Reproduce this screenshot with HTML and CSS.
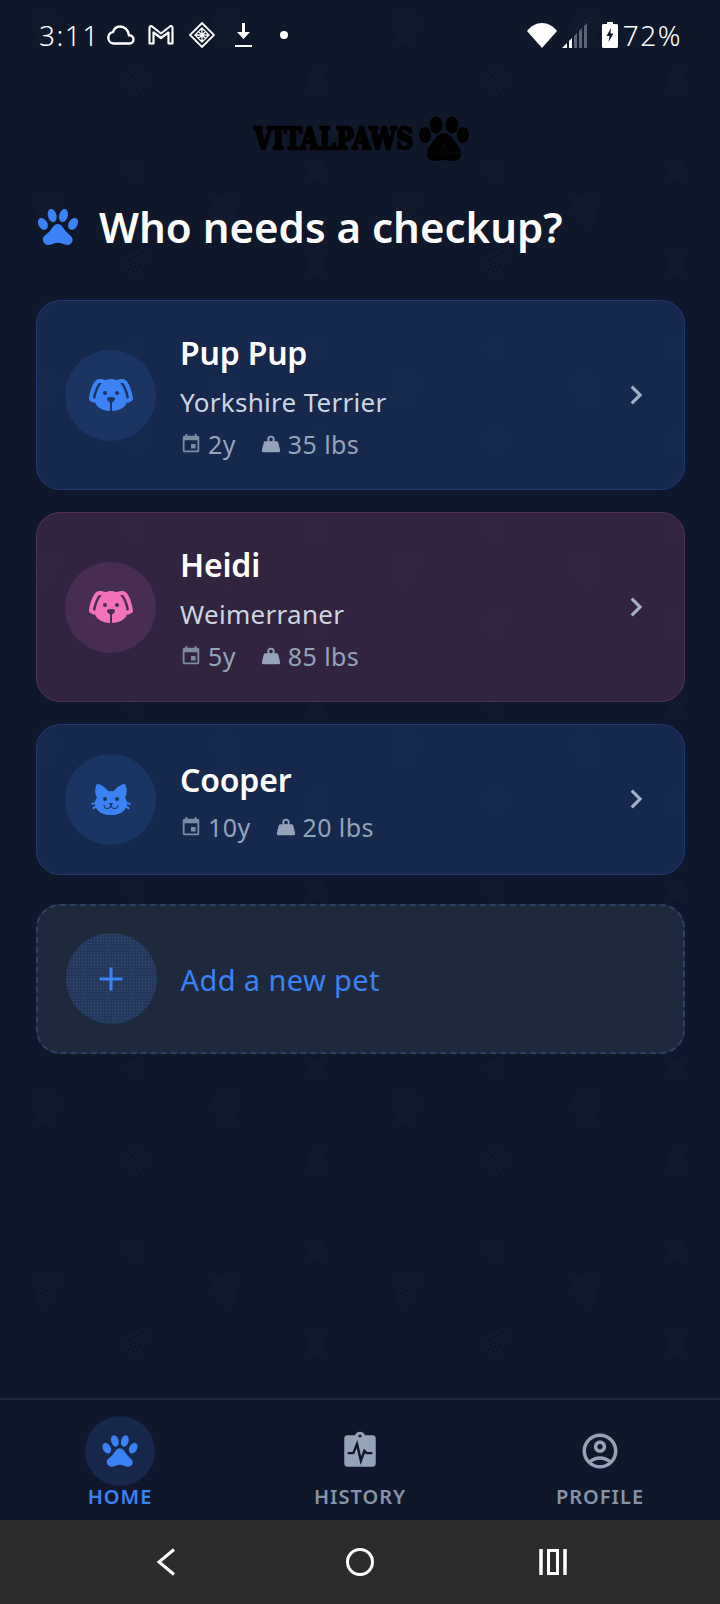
FILE: index.html
```html
<!DOCTYPE html>
<html lang="en">
<head>
  <meta charset="UTF-8" />
  <meta name="viewport" content="width=device-width, initial-scale=1.0" />
  <title>VitalPaws</title>
  <link rel="stylesheet" href="styles.css">
</head>
<body>

  <!-- faint paw wallpaper -->
  <svg class="wallpaper" width="720" height="1604" aria-hidden="true">
    <defs>
      <pattern id="dots" width="4" height="4" patternUnits="userSpaceOnUse" patternTransform="rotate(30)">
        <circle cx="2" cy="2" r="0.6" fill="#2e3848" />
      </pattern>
      <pattern id="tile" width="180" height="180" patternUnits="userSpaceOnUse">
        <path fill="url(#dots)" d="M32 20 C36 12 54 12 58 20 L59 28 L56 29 L56 39 C54 46 36 46 36 39 L36 29 L32 28 Z" />
        <path fill="url(#dots)" d="M127 74 C130 69 142 69 145 74 L145 84 C144 92 139 96 135 97 C131 96 128 92 127 84 Z" />
        <path fill="url(#dots)" d="M127 163 C130 160 141 160 144 163 L142 176 C140 182 137 184 136 184 C134 184 131 182 129 176 Z" />
      </pattern>
    </defs>
    <rect width="720" height="1604" fill="url(#tile)" />
  </svg>

  <div class="status-bar">
    <div class="status-left">
      <span class="status-time">3:11</span>
      <svg class="ic-cloud" width="28" height="20" viewBox="0 0 28 20"><path fill="none" stroke="#fff" stroke-width="2.400" d="M7 18.500H22.500C25 18.500 26.500 16.500 26.500 14.500 26.500 12 24.500 10.300 22 10.300 21.500 5 17.500 1.500 13 1.500 9.500 1.500 7 4 6 7 3.500 7.300 1.300 9.800 1.300 12.800 1.300 16 3.800 18.500 7 18.500Z" /></svg>
      <svg class="ic-mail" width="26" height="20" viewBox="0 0 26 20"><path fill="none" stroke="#fff" stroke-width="2.200" stroke-linejoin="round" d="M1.500 3 Q1.500 1 3.500 1 L13 8.500 22.500 1 Q24.500 1 24.500 3 V18.500 H20.500 V7.500 L13 13 5.500 7.500 V18.500 H1.500 Z" /></svg>
      <svg class="ic-diamond" width="26" height="26" viewBox="0 0 26 26"><g fill="none" stroke="#fff"><path stroke-width="1.800" d="M13 1 L25 13 13 25 1 13Z" /><path stroke-width="1.300" d="M13 6 L20 13 13 20 6 13Z M9.500 9.500 L16.500 16.500 M16.500 9.500 L9.500 16.500 M13 6 V20 M6 13 H20" /></g></svg>
      <svg class="ic-download" width="19" height="25" viewBox="0 0 19 25"><path fill="#fff" d="M8 0H11V9H16L9.500 16 3 9H8ZM1 22H18V24H1Z" /></svg>
      <span class="status-dot"></span>
    </div>
    <div class="status-right">
      <svg width="30" height="25" viewBox="0 0 30 25"><path fill="#fff" d="M15 25 L0 8 C4 3 9 0 15 0 C21 0 26 3 30 8 Z" /></svg>
      <svg class="ic-signal" width="26" height="26" viewBox="0 0 26 26">
        <path fill="#fff" d="M0 26L5 21V26Z M7 19L10 16V26H7Z" />
        <path fill="#5b6473" d="M12 14L15 11V26H12Z M17 9L20 6V26H17Z M22 4L25 1V26H22Z" />
      </svg>
      <svg class="ic-battery" width="16" height="26" viewBox="0 0 16 26"><path fill="#fff" fill-rule="evenodd" d="M5 0H11V2H14.500C15.300 2 16 2.700 16 3.500V24.500C16 25.300 15.300 26 14.500 26H1.500C0.700 26 0 25.300 0 24.500V3.500C0 2.700 0.700 2 1.500 2H5ZM9 6L4.500 14H7.500L6.500 20 11.500 11.500H8.500Z" /></svg>
      <span class="status-pct">72%</span>
    </div>
  </div>

  <div class="logo">
    <span class="logo-text">VITALPAWS</span>
    <svg width="50" height="46" viewBox="0 0 50 46">
      <g fill="#000">
        <ellipse cx="17" cy="9" rx="6.500" ry="8.500" />
        <ellipse cx="33" cy="9" rx="6.500" ry="8.500" />
        <ellipse cx="6" cy="19" rx="6" ry="8" />
        <ellipse cx="44" cy="19" rx="6" ry="8" />
        <path d="M25 17 C32 17 37 27 41 33 C44 39 41 45 35 45 C31 45 29 44 25 44 C21 44 19 45 15 45 C9 45 6 39 9 33 C13 27 18 17 25 17Z" />
      </g>
      <path fill="none" stroke="#101827" stroke-width="0.500" d="M8 36H19L21 38 23 33 25 27 27 39 29 34 31 37H42" />
    </svg>
  </div>

  <h1 class="page-title">
    <svg class="ic-title" width="48" height="48" viewBox="0 0 24 24"><path d="M8.350,3C9.530,2.830 10.800,4.120 11.210,5.920C11.600,7.710 11.030,9.320 9.850,9.500C8.680,9.680 7.400,8.390 7,6.600C6.590,4.810 7.170,3.200 8.350,3M15.500,3C16.690,3.200 17.270,4.810 16.880,6.600C16.470,8.390 15.190,9.680 14,9.500C12.830,9.320 12.260,7.710 12.660,5.920C13.070,4.120 14.340,2.830 15.500,3M3,7.600C4.140,7.110 5.690,8 6.500,9.550C7.260,11.130 7,12.790 5.870,13.280C4.740,13.770 3.200,12.890 2.410,11.320C1.620,9.750 1.900,8.080 3,7.600M21,7.600C22.100,8.080 22.380,9.750 21.590,11.320C20.800,12.890 19.260,13.770 18.130,13.280C17,12.790 16.740,11.130 17.500,9.550C18.310,8 19.860,7.110 21,7.600M19.330,18.380C19.370,19.320 18.650,20.360 17.790,20.750C16,21.570 13.880,19.870 11.890,19.870C9.900,19.870 7.760,21.640 6,20.750C5,20.260 4.310,18.960 4.440,17.880C4.620,16.390 6.410,15.590 7.470,14.500C8.880,13.090 9.880,10.440 11.890,10.440C13.890,10.440 14.950,13.050 16.300,14.500C17.410,15.720 19.260,16.750 19.330,18.380Z" /></svg>
    Who needs a checkup?
  </h1>

  <main class="pets">

    <a class="pet-card blue">
      <div class="avatar">
        <svg width="48" height="48" viewBox="0 0 24 24"><path d="M18,4C16.290,4 15.250,4.330 14.650,4.610C13.880,4.230 13,4 12,4C11,4 10.120,4.230 9.350,4.610C8.750,4.330 7.710,4 6,4C3,4 1,12 1,14C1,14.830 2.320,15.590 4.140,15.900C4.780,18.140 7.800,19.850 11.500,20V15.720C10.910,15.350 10,14.680 10,14C10,13 12,13 12,13C12,13 14,13 14,14C14,14.680 13.090,15.350 12.500,15.720V20C16.200,19.850 19.220,18.140 19.860,15.900C21.680,15.590 23,14.830 23,14C23,12 21,4 18,4M4.150,13.870C3.650,13.750 3.260,13.610 3,13.500C3.250,10.730 5.200,6.400 6.050,6C6.590,6 7,6.060 7.370,6.110C5.270,8.420 4.440,12.040 4.150,13.870M9,12A1,1 0 0,1 8,11C8,10.460 8.450,10 9,10A1,1 0 0,1 10,11C10,11.560 9.550,12 9,12M15,12A1,1 0 0,1 14,11C14,10.460 14.450,10 15,10A1,1 0 0,1 16,11C16,11.560 15.550,12 15,12M19.850,13.870C19.560,12.040 18.730,8.420 16.630,6.110C17,6.060 17.410,6 17.950,6C18.800,6.400 20.750,10.730 21,13.500C20.750,13.610 20.360,13.750 19.850,13.870Z" /></svg>
      </div>
      <div class="pet-info">
        <div class="pet-name">Pup Pup</div>
        <div class="pet-breed">Yorkshire Terrier</div>
        <div class="pet-meta">
          <span class="meta-item"><svg class="ic-meta dim" viewBox="0 0 24 24"><path d="M17 12h-5v5h5v-5zM16 1v2H8V1H6v2H5c-1.110 0-1.990.9-1.990 2L3 19c0 1.100.89 2 2 2h14c1.100 0 2-.9 2-2V5c0-1.100-.9-2-2-2h-1V1h-2zm3 18H5V8h14v11z" /></svg>2y</span>
          <span class="meta-item"><svg class="ic-meta" viewBox="0 0 24 24"><path d="M12,3A4,4 0 0,1 16,7C16,7.730 15.810,8.410 15.460,9H18C18.950,9 19.750,9.670 19.950,10.560C21.960,18.570 22,18.780 22,19A2,2 0 0,1 20,21H4A2,2 0 0,1 2,19C2,18.780 2.040,18.570 4.050,10.560C4.250,9.670 5.050,9 6,9H8.540C8.190,8.410 8,7.730 8,7A4,4 0 0,1 12,3M12,5A2,2 0 0,0 10,7A2,2 0 0,0 12,9A2,2 0 0,0 14,7A2,2 0 0,0 12,5Z" /></svg>35 lbs</span>
        </div>
      </div>
      <svg class="chevron" viewBox="0 0 24 24"><path d="M10 6L8.590 7.410 13.170 12l-4.580 4.590L10 18l6-6z" /></svg>
    </a>

    <a class="pet-card pink">
      <div class="avatar">
        <svg width="48" height="48" viewBox="0 0 24 24"><path d="M18,4C16.290,4 15.250,4.330 14.650,4.610C13.880,4.230 13,4 12,4C11,4 10.120,4.230 9.350,4.610C8.750,4.330 7.710,4 6,4C3,4 1,12 1,14C1,14.830 2.320,15.590 4.140,15.900C4.780,18.140 7.800,19.850 11.500,20V15.720C10.910,15.350 10,14.680 10,14C10,13 12,13 12,13C12,13 14,13 14,14C14,14.680 13.090,15.350 12.500,15.720V20C16.200,19.850 19.220,18.140 19.860,15.900C21.680,15.590 23,14.830 23,14C23,12 21,4 18,4M4.150,13.870C3.650,13.750 3.260,13.610 3,13.500C3.250,10.730 5.200,6.400 6.050,6C6.590,6 7,6.060 7.370,6.110C5.270,8.420 4.440,12.040 4.150,13.870M9,12A1,1 0 0,1 8,11C8,10.460 8.450,10 9,10A1,1 0 0,1 10,11C10,11.560 9.550,12 9,12M15,12A1,1 0 0,1 14,11C14,10.460 14.450,10 15,10A1,1 0 0,1 16,11C16,11.560 15.550,12 15,12M19.850,13.870C19.560,12.040 18.730,8.420 16.630,6.110C17,6.060 17.410,6 17.950,6C18.800,6.400 20.750,10.730 21,13.500C20.750,13.610 20.360,13.750 19.850,13.870Z" /></svg>
      </div>
      <div class="pet-info">
        <div class="pet-name">Heidi</div>
        <div class="pet-breed">Weimerraner</div>
        <div class="pet-meta">
          <span class="meta-item"><svg class="ic-meta dim" viewBox="0 0 24 24"><path d="M17 12h-5v5h5v-5zM16 1v2H8V1H6v2H5c-1.110 0-1.990.9-1.990 2L3 19c0 1.100.89 2 2 2h14c1.100 0 2-.9 2-2V5c0-1.100-.9-2-2-2h-1V1h-2zm3 18H5V8h14v11z" /></svg>5y</span>
          <span class="meta-item"><svg class="ic-meta" viewBox="0 0 24 24"><path d="M12,3A4,4 0 0,1 16,7C16,7.730 15.810,8.410 15.460,9H18C18.950,9 19.750,9.670 19.950,10.560C21.960,18.570 22,18.780 22,19A2,2 0 0,1 20,21H4A2,2 0 0,1 2,19C2,18.780 2.040,18.570 4.050,10.560C4.250,9.670 5.050,9 6,9H8.540C8.190,8.410 8,7.730 8,7A4,4 0 0,1 12,3M12,5A2,2 0 0,0 10,7A2,2 0 0,0 12,9A2,2 0 0,0 14,7A2,2 0 0,0 12,5Z" /></svg>85 lbs</span>
        </div>
      </div>
      <svg class="chevron" viewBox="0 0 24 24"><path d="M10 6L8.590 7.410 13.170 12l-4.580 4.590L10 18l6-6z" /></svg>
    </a>

    <a class="pet-card blue">
      <div class="avatar">
        <svg width="48" height="48" viewBox="0 0 24 24"><path d="M12,8L10.670,8.090C9.810,7.070 7.400,4.500 5,4.500C5,4.500 3.030,7.460 4.960,11.410C4.410,12.240 4.070,12.670 4,13.660L2.070,13.950L2.280,14.930L4.040,14.670L4.180,15.380L2.610,16.320L3.080,17.210L4.530,16.320C5.680,18.760 8.590,20 12,20C15.410,20 18.320,18.760 19.470,16.320L20.920,17.210L21.390,16.320L19.820,15.380L19.960,14.670L21.720,14.930L21.930,13.950L20,13.660C19.930,12.670 19.590,12.240 19.040,11.410C20.970,7.460 19,4.500 19,4.500C16.600,4.500 14.190,7.070 13.330,8.090L12,8M9,11A1,1 0 0,1 10,12A1,1 0 0,1 9,13A1,1 0 0,1 8,12A1,1 0 0,1 9,11M15,11A1,1 0 0,1 16,12A1,1 0 0,1 15,13A1,1 0 0,1 14,12A1,1 0 0,1 15,11M11,14H13L12.300,15.390C12.500,16.030 13.060,16.500 13.750,16.500A1.500,1.500 0 0,0 15.250,15H15.750A2,2 0 0,1 13.750,17C13,17 12.350,16.590 12,16V16H12C11.650,16.590 11,17 10.250,17A2,2 0 0,1 8.250,15H8.750A1.500,1.500 0 0,0 10.250,16.500C10.940,16.500 11.500,16.030 11.700,15.390L11,14Z" /></svg>
      </div>
      <div class="pet-info short">
        <div class="pet-name">Cooper</div>
        <div class="pet-meta">
          <span class="meta-item"><svg class="ic-meta dim" viewBox="0 0 24 24"><path d="M17 12h-5v5h5v-5zM16 1v2H8V1H6v2H5c-1.110 0-1.990.9-1.990 2L3 19c0 1.100.89 2 2 2h14c1.100 0 2-.9 2-2V5c0-1.100-.9-2-2-2h-1V1h-2zm3 18H5V8h14v11z" /></svg>10y</span>
          <span class="meta-item"><svg class="ic-meta" viewBox="0 0 24 24"><path d="M12,3A4,4 0 0,1 16,7C16,7.730 15.810,8.410 15.460,9H18C18.950,9 19.750,9.670 19.950,10.560C21.960,18.570 22,18.780 22,19A2,2 0 0,1 20,21H4A2,2 0 0,1 2,19C2,18.780 2.040,18.570 4.050,10.560C4.250,9.670 5.050,9 6,9H8.540C8.190,8.410 8,7.730 8,7A4,4 0 0,1 12,3M12,5A2,2 0 0,0 10,7A2,2 0 0,0 12,9A2,2 0 0,0 14,7A2,2 0 0,0 12,5Z" /></svg>20 lbs</span>
        </div>
      </div>
      <svg class="chevron" viewBox="0 0 24 24"><path d="M10 6L8.590 7.410 13.170 12l-4.580 4.590L10 18l6-6z" /></svg>
    </a>

    <a class="add-card">
      <div class="avatar">
        <svg width="30" height="30" viewBox="0 0 30 30"><path d="M13.500 3.500h3v10h10v3h-10v10h-3v-10h-10v-3h10z" /></svg>
      </div>
      <div class="add-label">Add a new pet</div>
    </a>

  </main>

  <nav class="tabs">
    <a class="tab active">
      <span class="tab-icon"><svg width="42" height="42" viewBox="0 0 24 24"><path d="M8.350,3C9.530,2.830 10.800,4.120 11.210,5.920C11.600,7.710 11.030,9.320 9.850,9.500C8.680,9.680 7.400,8.390 7,6.600C6.590,4.810 7.170,3.200 8.350,3M15.500,3C16.690,3.200 17.270,4.810 16.880,6.600C16.470,8.390 15.190,9.680 14,9.500C12.830,9.320 12.260,7.710 12.660,5.920C13.070,4.120 14.340,2.830 15.500,3M3,7.600C4.140,7.110 5.690,8 6.500,9.550C7.260,11.130 7,12.790 5.870,13.280C4.740,13.770 3.200,12.890 2.410,11.320C1.620,9.750 1.900,8.080 3,7.600M21,7.600C22.100,8.080 22.380,9.750 21.590,11.320C20.800,12.890 19.260,13.770 18.130,13.280C17,12.790 16.740,11.130 17.500,9.550C18.310,8 19.860,7.110 21,7.600M19.330,18.380C19.370,19.320 18.650,20.360 17.790,20.750C16,21.570 13.880,19.870 11.890,19.870C9.900,19.870 7.760,21.640 6,20.750C5,20.260 4.310,18.960 4.440,17.880C4.620,16.390 6.410,15.590 7.470,14.500C8.880,13.090 9.880,10.440 11.890,10.440C13.890,10.440 14.950,13.050 16.300,14.500C17.410,15.720 19.260,16.750 19.330,18.380Z" /></svg></span>
      HOME
    </a>
    <a class="tab">
      <span class="tab-icon"><svg width="42" height="42" viewBox="0 0 24 24"><path d="M19,3H14.820C14.400,1.840 13.300,1 12,1C10.700,1 9.600,1.840 9.180,3H5A2,2 0 0,0 3,5V19A2,2 0 0,0 5,21H19A2,2 0 0,0 21,19V5A2,2 0 0,0 19,3Z" /><circle class="clip-hole" cx="12" cy="3.400" r="0.900" /><path class="pulse" d="M5 13.200H8.200L10.300 8 12.500 17.500 14.500 12 15.800 13.200H19" /></svg></span>
      HISTORY
    </a>
    <a class="tab">
      <span class="tab-icon"><svg width="42" height="42" viewBox="0 0 24 24"><path d="M12 2C6.480 2 2 6.480 2 12s4.480 10 10 10 10-4.480 10-10S17.520 2 12 2zM7.350 18.500C8.660 17.560 10.260 17 12 17s3.340.56 4.650 1.500c-1.310.94-2.910 1.500-4.650 1.500s-3.340-.56-4.650-1.500zm10.790-1.380C16.450 15.800 14.320 15 12 15s-4.450.8-6.140 2.120C4.700 15.730 4 13.950 4 12c0-4.420 3.580-8 8-8s8 3.580 8 8c0 1.950-.7 3.730-1.860 5.120z" /><path d="M12 6c-1.930 0-3.500 1.570-3.500 3.500S10.070 13 12 13s3.500-1.570 3.500-3.500S13.930 6 12 6zm0 5c-.83 0-1.500-.67-1.500-1.500S11.170 8 12 8s1.500.67 1.500 1.500S12.830 11 12 11z" /></svg></span>
      PROFILE
    </a>
  </nav>

  <div class="system-nav">
    <svg class="nav-back" width="20" height="28" viewBox="0 0 20 28"><path fill="none" stroke="#fff" stroke-width="3" d="M18 1.500 L3 14 18 26.500" /></svg>
    <svg class="nav-home" width="28" height="28" viewBox="0 0 28 28"><circle cx="14" cy="14" r="12.500" fill="none" stroke="#fff" stroke-width="3" /></svg>
    <svg width="28" height="26" viewBox="0 0 28 26"><path fill="none" stroke="#fff" stroke-width="3.500" d="M2 0V26M26 0V26" /><rect x="9.500" y="1.500" width="9" height="23" fill="none" stroke="#fff" stroke-width="3" /></svg>
  </div>

</body>
</html>
```

FILE: styles.css
```css
* {
  box-sizing: border-box;
}
body {
  margin: 0;
  width: 720px;
  height: 1604px;
  overflow: hidden;
  position: relative;
  display: flex;
  flex-direction: column;
  font-family: 'Noto Sans', sans-serif;
  background: #0f172a;
  color: #fff;
}
.wallpaper {
  position: absolute;
  top: 0;
  left: 0;
}

/* status bar */
.status-bar {
  position: relative;
  height: 70px;
  padding: 0 38px 0 39px;
  display: flex;
  justify-content: space-between;
  align-items: center;
  color: #fff;
}
.status-left,
.status-right {
  display: flex;
  align-items: center;
}
.status-time,
.status-pct {
  font-size: 28px;
  line-height: 36px;
  font-weight: 300;
  letter-spacing: 1.500px;
}
.ic-cloud { margin-left: 7px; }
.ic-mail { margin-left: 13px; }
.ic-diamond { margin-left: 15px; }
.ic-download { margin-left: 19px; }
.status-dot {
  width: 8px;
  height: 8px;
  margin-left: 27px;
  border-radius: 50%;
  background: #fff;
}
.status-right svg + svg {
  margin-left: 5px;
}
.ic-signal + .ic-battery {
  margin-left: 14px !important;
}
.status-pct {
  margin-left: 5px;
}

/* logo */
.logo {
  position: relative;
  margin-top: 46px;
  height: 46px;
  padding-left: 3px;
  display: flex;
  justify-content: center;
  align-items: center;
  gap: 5px;
}
.logo-text {
  display: inline-block;
  font-family: 'DejaVu Serif', serif;
  font-stretch: condensed;
  font-weight: 700;
  font-size: 26px;
  letter-spacing: 0.500px;
  color: #000;
  -webkit-text-stroke: 2px #000;
  transform: scaleY(1.150);
}

.page-title {
  position: relative;
  margin: 35px 0 0;
  padding-left: 34px;
  height: 60px;
  display: flex;
  align-items: center;
  gap: 17px;
  font-size: 42px;
  line-height: 60px;
  font-weight: 600;
}
.ic-title {
  fill: #3b82f6;
}

/* pet list */
.pets {
  position: relative;
  margin-top: 43px;
  padding: 0 35px 0 36px;
  display: flex;
  flex-direction: column;
  gap: 22px;
}
.pet-card {
  display: flex;
  align-items: center;
  padding: 0 28px;
  border-radius: 24px;
  border: 1.500px solid;
}
.pet-card.blue {
  background: rgba(30, 55, 103, 0.55);
  border-color: #1e3a6e;
}
.pet-card.pink {
  background: rgba(81, 48, 80, 0.55);
  border-color: #503353;
}
.avatar {
  width: 91px;
  height: 91px;
  flex: none;
  border-radius: 50%;
  display: flex;
  justify-content: center;
  align-items: center;
}
.blue .avatar {
  background: #1b3461;
}
.blue .avatar svg {
  fill: #3b82f6;
}
.pink .avatar {
  background: #472d4f;
}
.pink .avatar svg {
  fill: #f472b6;
}
.pet-info {
  flex: 1;
  margin-left: 24px;
  padding: 30px 0 28px;
}
.pet-info.short {
  padding: 33px 0 29.500px;
}
.pet-name {
  font-size: 32px;
  line-height: 44px;
  font-weight: 600;
  letter-spacing: -0.200px;
}
.pet-breed {
  font-size: 26px;
  line-height: 34px;
  letter-spacing: 0.300px;
  margin-top: 10px;
  color: #cbd5e1;
}
.pet-meta {
  display: flex;
  gap: 24px;
  margin-top: 8px;
  font-size: 25px;
  line-height: 34px;
  letter-spacing: 0.400px;
  color: #94a3b8;
}
.meta-item {
  display: flex;
  align-items: center;
  gap: 6px;
}
.ic-meta {
  width: 22px;
  height: 22px;
  fill: #94a3b8;
}
.ic-meta.dim {
  fill: #7d8aa0;
}
.chevron {
  width: 38px;
  height: 38px;
  flex: none;
  margin-right: 1px;
  fill: #a3b0c4;
}

.add-card {
  display: flex;
  align-items: center;
  height: 150px;
  margin-top: 7px;
  padding: 0 27.500px;
  border-radius: 24px;
  border: 2px dashed #2b4166;
  background: #1e293b;
}
.add-card .avatar {
  background: radial-gradient(#33507e 0.6px, transparent 0.8px) 0 0 / 3px 3px, #25385a;
}
.add-card .avatar svg {
  fill: #3b82f6;
}
.add-label {
  margin-left: 24px;
  padding-top: 2px;
  font-size: 29px;
  line-height: 40px;
  letter-spacing: 0.400px;
  color: #3b82f6;
}

/* bottom tabs */
.tabs {
  position: absolute;
  left: 0;
  right: 0;
  bottom: 84px;
  height: 122px;
  display: flex;
  border-top: 2px solid #1e293b;
  background: #0f172a;
}
.tab {
  flex: 1;
  display: flex;
  flex-direction: column;
  align-items: center;
  padding-top: 16px;
  font-size: 20px;
  line-height: 24px;
  font-weight: 600;
  letter-spacing: 1px;
  color: #8593a9;
}
.tab-icon {
  width: 70px;
  height: 70px;
  margin-bottom: -1px;
  border-radius: 50%;
  display: flex;
  justify-content: center;
  align-items: center;
}
.tab svg {
  fill: #94a3b8;
}
.tab.active {
  color: #3b82f6;
}
.tab.active .tab-icon {
  background: #16274a;
}
.tab.active svg {
  fill: #3b82f6;
}
.tab svg .pulse {
  fill: none;
  stroke: #0f172a;
  stroke-width: 1.400;
}
.tab svg .clip-hole {
  fill: #0f172a;
}

/* android nav */
.system-nav {
  position: absolute;
  left: 0;
  right: 0;
  bottom: 0;
  height: 84px;
  padding-left: 156px;
  background: #2b2c2e;
  display: flex;
  align-items: center;
}
.nav-back {
  margin-right: 170px;
}
.nav-home {
  margin-right: 165px;
}
```
